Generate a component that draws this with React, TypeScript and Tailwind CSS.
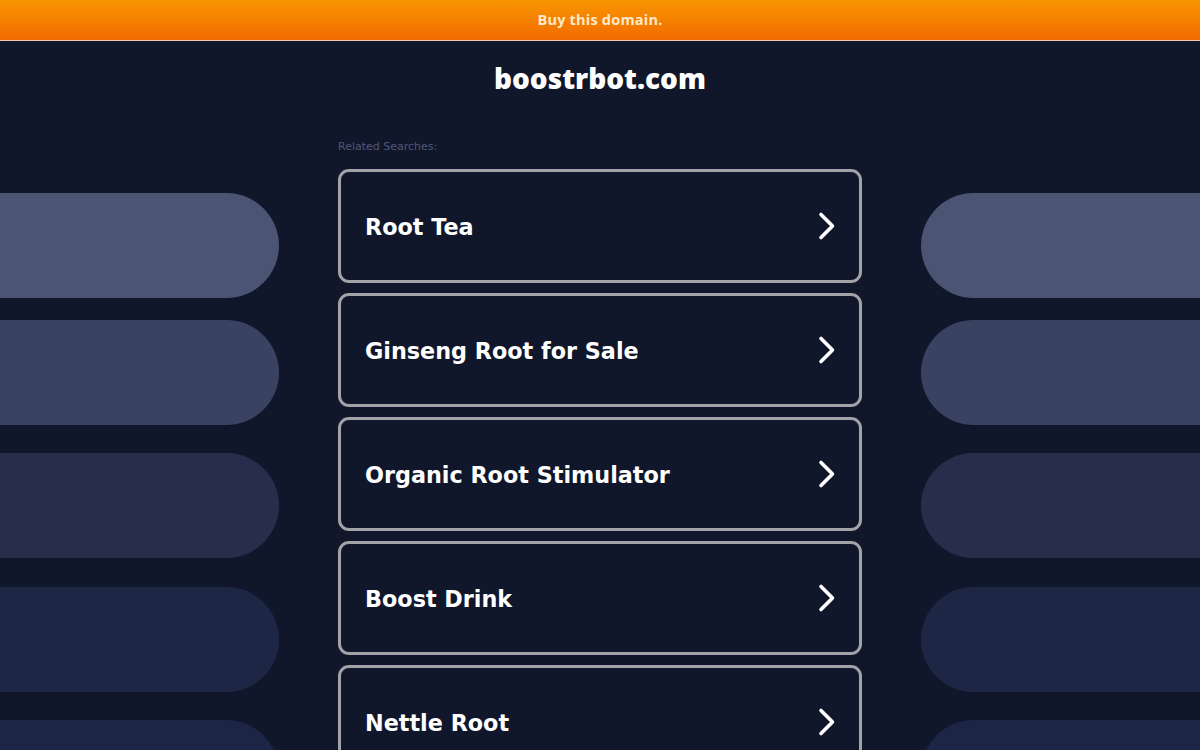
import React from "react";

const items = ["Root Tea", "Ginseng Root for Sale", "Organic Root Stimulator", "Boost Drink", "Nettle Root"];

const pills = [
  { color: "bg-[#4b5472]", mt: "mt-0" },
  { color: "bg-[#3a4261]", mt: "mt-[22px]" },
  { color: "bg-[#272e4c]", mt: "mt-[28px]" },
  { color: "bg-[#1e2646]", mt: "mt-[29px]" },
  { color: "bg-[#1c2546]", mt: "mt-[28px]" },
];

function Chevron() {
  return (
    <svg width="20" height="30" viewBox="0 0 20 30" fill="none">
      <polyline points="4,3.5 15.5,15 4,26.5" stroke="white" strokeWidth="3.6" strokeLinecap="round" strokeLinejoin="round" />
    </svg>
  );
}

export default function App() {
  return (
    <div className="h-[750px] w-[1200px] overflow-hidden bg-[#11172b]">
      <div className="flex h-10 items-center justify-center bg-gradient-to-b from-[#f79500] to-[#f26a00]">
        <span className="text-[14.5px] font-bold tracking-[0.2px] text-[#fde9c8]" style={{ fontFamily: '"Open Sans", sans-serif' }}>
          Buy this domain.
        </span>
      </div>
      <div className="h-px bg-[#efcaa6]" />
      <div className="flex h-[89px] justify-center pt-[19px]">
        <h1 className="text-[28px] font-extrabold leading-[36px] text-white" style={{ fontFamily: '"Open Sans", sans-serif' }}>
          boostrbot.com
        </h1>
      </div>
      <div className="flex items-start justify-between">
        <div className="flex w-[279px] flex-col pt-[63px]">
          {pills.map((p, i) => (
            <div key={i} className={`h-[105px] w-full rounded-r-full ${p.color} ${p.mt}`} />
          ))}
        </div>
        <div className="flex w-[524px] flex-col">
          <div className="mt-[10px] text-[11px] leading-[14px] text-[#4f5878]" style={{ fontFamily: '"DejaVu Sans", sans-serif' }}>
            Related Searches:
          </div>
          <div className="mt-[15px] flex flex-col gap-[10px]">
            {items.map((t) => (
              <div key={t} className="flex h-[114px] items-center justify-between rounded-[11px] border-[3px] border-[#a1a3a9] bg-[#11172b] pl-6 pr-[22px]">
                <span className="mt-[3px] text-[22.3px] font-bold text-white" style={{ fontFamily: '"DejaVu Sans", sans-serif' }}>
                  {t}
                </span>
                <Chevron />
              </div>
            ))}
          </div>
        </div>
        <div className="flex w-[279px] flex-col pt-[63px]">
          {pills.map((p, i) => (
            <div key={i} className={`h-[105px] w-full rounded-l-full ${p.color} ${p.mt}`} />
          ))}
        </div>
      </div>
    </div>
  );
}
